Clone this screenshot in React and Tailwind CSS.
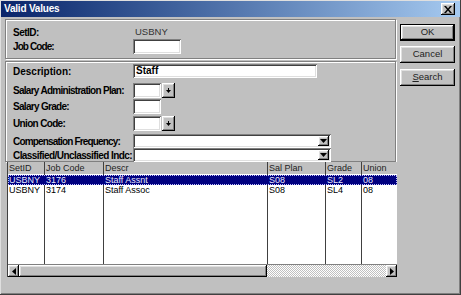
import React from "react";

const raised =
  "shadow-[inset_-1px_-1px_0_#000000,inset_1px_1px_0_#ffffff,inset_-2px_-2px_0_#808080,inset_2px_2px_0_#dfdfdf]";
const sunken =
  "shadow-[inset_1px_1px_0_#808080,inset_-1px_-1px_0_#ffffff,inset_2px_2px_0_#404040,inset_-2px_-2px_0_#dfdfdf]";

function DownBtn() {
  return (
    <div className={`w-[13px] h-[15px] bg-[#c0c0c0] ${raised} flex items-center justify-center`}>
      <svg width="7" height="6" viewBox="0 0 7 6">
        <path d="M3 0h1v2h-1z" fill="#000" />
        <path d="M1 2h5l-2.5 3z" fill="#000" />
      </svg>
    </div>
  );
}

function Combo() {
  return (
    <div className={`w-[198px] h-[14px] bg-white ${sunken} flex justify-end p-[2px]`}>
      <div className={`w-[11px] h-full bg-[#c0c0c0] ${raised} flex items-center justify-center`}>
        <svg width="7" height="6" viewBox="0 0 7 6">
          <path d="M0 1h7l-3.5 4z" fill="#000" />
        </svg>
      </div>
    </div>
  );
}

function Row({ label, h, mt, children }) {
  return (
    <div className={`flex items-center ${h} ${mt}`}>
      <div className="w-[120px] whitespace-nowrap font-bold text-[10px]">{label}</div>
      {children}
    </div>
  );
}

export default function App() {
  const font = { fontFamily: '"Liberation Sans", Arial, sans-serif' };
  const cols = [
    { t: "SetID", w: "w-[36px]" },
    { t: "Job Code", w: "w-[59px]" },
    { t: "Descr", w: "w-[164px]" },
    { t: "Sal Plan", w: "w-[58px]" },
    { t: "Grade", w: "w-[36px]" },
    { t: "Union", w: "w-[35px]" },
  ];
  const rows = [
    ["USBNY", "3176", "Staff Assnt", "S08", "SL2", "08"],
    ["USBNY", "3174", "Staff Assoc", "S08", "SL4", "08"],
  ];
  return (
    <div
      style={font}
      className="w-[461px] h-[295px] bg-[#c0c0c0] text-[11px] text-black flex flex-col p-[1px] shadow-[inset_-1px_-1px_0_#404040,inset_1px_1px_0_#dfdfdf,inset_-2px_-2px_0_#808080] overflow-hidden"
    >
      {/* title bar */}
      <div className="h-[16px] bg-gradient-to-r from-[#0a246a] to-[#a6caf0] flex items-center justify-between pl-[3px] pr-[5px]">
        <span className="text-white font-bold text-[10px] tracking-[-0.2px] leading-none">Valid Values</span>
        <div className={`w-[14px] h-[12px] bg-[#c0c0c0] ${raised} flex items-center justify-center`}>
          <svg width="8" height="7" viewBox="0 0 8 7">
            <path d="M0 0h2l2 2.5 2-2.5h2l-3 3.5 3 3.5h-2l-2-2.5-2 2.5h-2l3-3.5z" fill="#000" />
          </svg>
        </div>
      </div>

      <div className="flex pl-[4px] pt-[2px]">
        {/* left */}
        <div className="w-[391px] flex flex-col">
          <div className="h-[40px] border border-[#808080] shadow-[1px_1px_0_#ffffff,inset_1px_1px_0_#ffffff] pl-[7px] pt-[5px]">
            <div className="flex items-center h-[14px]">
              <div className="w-[122px] font-bold text-[10px] tracking-[-0.5px]">SetID:</div>
              <div className="text-[#333] text-[9.5px]">USBNY</div>
            </div>
            <div className="flex items-center h-[15px]">
              <div className="w-[120px] font-bold text-[10px] tracking-[-0.9px]">Job Code:</div>
              <div className={`w-[48px] h-[15px] bg-white ${sunken}`} />
            </div>
          </div>

          <div className="mt-[2px] h-[101px] border border-[#808080] shadow-[1px_1px_0_#ffffff,inset_1px_1px_0_#ffffff] pl-[7px] pt-[2px]">
            <Row label={<span>Description:</span>} h="h-[14px]">
              <div className={`w-[184px] h-[14px] bg-white ${sunken} font-bold text-[10px] pl-[3px] leading-[14px]`}>Staff</div>
            </Row>
            <Row label={<span className="tracking-[-0.72px]">Salary Administration Plan:</span>} h="h-[15px]" mt="mt-[5px]">
              <div className={`w-[28px] h-[15px] bg-white ${sunken}`} />
              <div className="ml-[1px]"><DownBtn /></div>
            </Row>
            <Row label={<span className="tracking-[-0.7px]">Salary Grade:</span>} h="h-[15px]" mt="mt-[1px]">
              <div className={`w-[28px] h-[15px] bg-white ${sunken}`} />
            </Row>
            <Row label={<span className="tracking-[-0.66px]">Union Code:</span>} h="h-[15px]" mt="mt-[2px]">
              <div className={`w-[28px] h-[15px] bg-white ${sunken}`} />
              <div className="ml-[1px]"><DownBtn /></div>
            </Row>
            <Row label={<span className="tracking-[-0.83px]">Compensation Frequency:</span>} h="h-[14px]" mt="mt-[3px]">
              <Combo />
            </Row>
            <Row label={<span className="tracking-[-0.57px]">Classified/Unclassified Indc:</span>} h="h-[14px]" mt="mt-[0px]">
              <Combo />
            </Row>
          </div>

          {/* grid */}
          <div className="ml-[2px] w-[390px] h-[115px] flex flex-col border-l border-[#404040] text-[9px]">
            <div className="h-[12px] flex bg-[#c0c0c0] text-[#222]">
              {cols.map((c, i) => (
                <div key={i} className={`${c.w} ${i > 0 ? "border-l border-[#404040]" : ""} pl-[1px] leading-[12px] whitespace-nowrap overflow-hidden`}>
                  {c.t}
                </div>
              ))}
            </div>
            <div className="flex-1 bg-white relative flex flex-col pt-[1px]">
              <div className="absolute inset-0 flex pointer-events-none">
                {cols.map((c, i) => (
                  <div key={i} className={`${c.w} h-full ${i > 0 ? "border-l border-[#404040]" : ""}`} />
                ))}
              </div>
              {rows.map((r, ri) => (
                <div
                  key={ri}
                  className={`relative flex h-[10px] leading-[10px] ${ri === 0 ? "bg-[#000080] text-[#e8e8ff] outline-1 outline-dotted outline-[#c0c0ff] -outline-offset-1" : ""}`}
                >
                  {r.map((v, i) => (
                    <div key={i} className={`${cols[i].w} ${i > 0 ? "border-l border-transparent" : ""} pl-[1px] whitespace-nowrap overflow-hidden`}>
                      {v}
                    </div>
                  ))}
                </div>
              ))}
            </div>
            {/* scrollbar */}
            <div className="h-[13px] flex bg-[#c0c0c0] border-t border-[#808080]">
              <div className={`w-[11px] h-full bg-[#c0c0c0] ${raised} flex items-center justify-center`}>
                <svg width="4" height="7" viewBox="0 0 4 7"><path d="M4 0v7L0 3.5z" fill="#000" /></svg>
              </div>
              <div className={`w-[248px] h-full bg-[#c0c0c0] ${raised}`} />
              <div className="flex-1 h-full bg-[repeating-conic-gradient(#ffffff_0_25%,#c0c0c0_0_50%)] bg-[length:2px_2px]" />
              <div className={`w-[11px] h-full bg-[#c0c0c0] ${raised} flex items-center justify-center`}>
                <svg width="4" height="7" viewBox="0 0 4 7"><path d="M0 0v7L4 3.5z" fill="#000" /></svg>
              </div>
            </div>
          </div>
        </div>

        {/* right buttons */}
        <div className="ml-[4px] flex flex-col pt-[5px] text-[9.5px]">
          <div className="w-[55px] h-[17px] border border-black">
            <div className={`w-full h-full ${raised} flex items-center justify-center text-[#222]`}>OK</div>
          </div>
          <div className={`mt-[5px] w-[55px] h-[17px] ${raised} flex items-center justify-center text-[#222]`}>Cancel</div>
          <div className={`mt-[6px] w-[55px] h-[17px] ${raised} flex items-center justify-center text-[#222]`}>
            <span><span className="underline">S</span>earch</span>
          </div>
        </div>
      </div>
    </div>
  );
}
